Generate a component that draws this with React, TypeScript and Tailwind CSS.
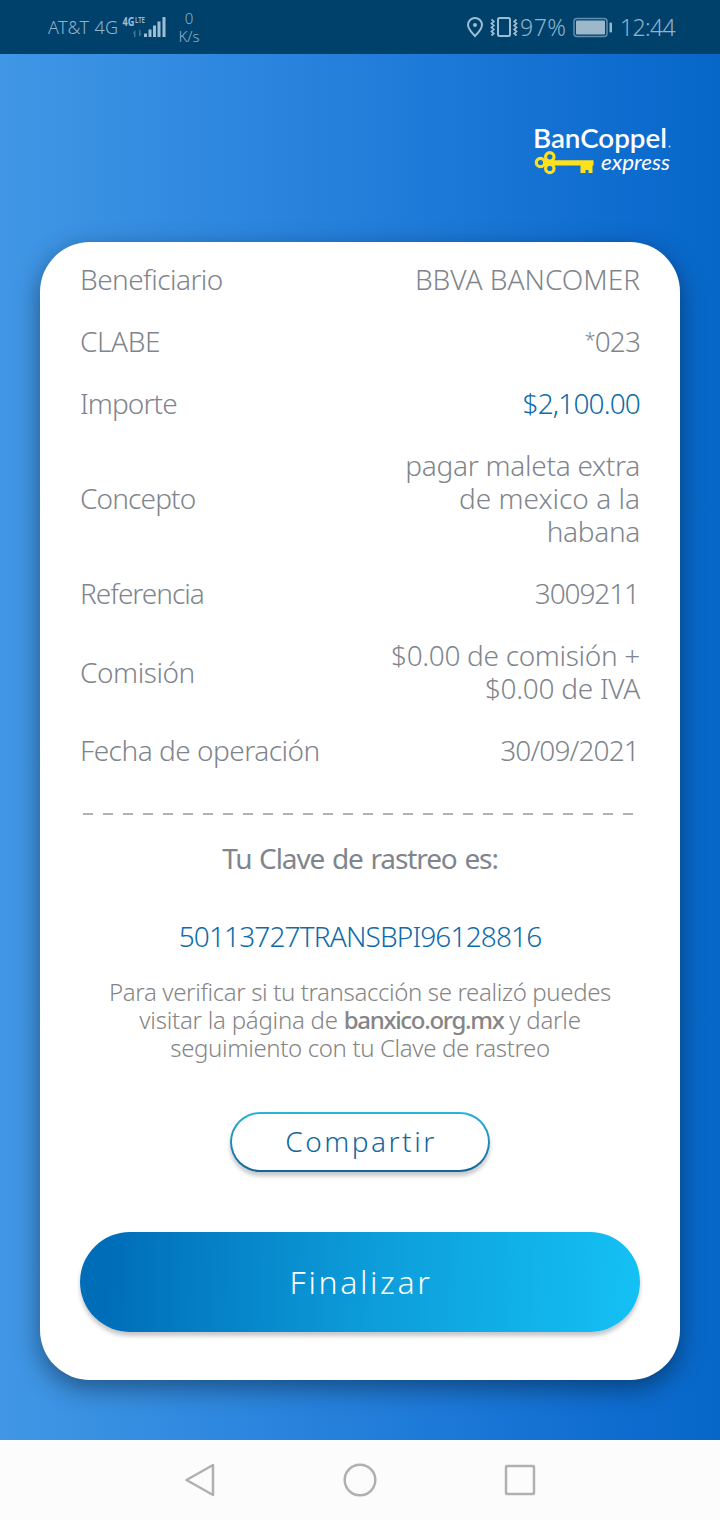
type Row = { label: string; labelClass: string; lines: { text: string; className: string }[]; valueClass?: string };

const rows: Row[] = [
  { label: "Beneficiario", labelClass: "tracking-[-0.550px]", lines: [{ text: "BBVA BANCOMER", className: "" }] },
  { label: "CLABE", labelClass: "tracking-[-0.400px]", lines: [{ text: "*023", className: "tracking-[-0.900px]" }] },
  {
    label: "Importe",
    labelClass: "tracking-[-0.900px]",
    lines: [{ text: "$2,100.00", className: "tracking-[-0.850px]" }],
    valueClass: "text-[#0f6ba8] font-[360]",
  },
  {
    label: "Concepto",
    labelClass: "tracking-[-0.850px]",
    lines: [
      { text: "pagar maleta extra", className: "tracking-[-0.280px]" },
      { text: "de mexico a la", className: "" },
      { text: "habana", className: "tracking-[-0.300px]" },
    ],
  },
  { label: "Referencia", labelClass: "tracking-[-1px]", lines: [{ text: "3009211", className: "tracking-[-1.100px] pr-px" }] },
  {
    label: "Comisión",
    labelClass: "tracking-[-0.450px]",
    lines: [
      { text: "$0.00 de comisión +", className: "tracking-[-0.320px]" },
      { text: "$0.00 de IVA", className: "tracking-[-0.280px]" },
    ],
  },
  { label: "Fecha de operación", labelClass: "tracking-[-0.500px]", lines: [{ text: "30/09/2021", className: "tracking-[-0.850px] pr-px" }] },
];

function StatusBar() {
  return (
    <header className="flex h-[54px] shrink-0 items-center justify-between bg-[#00416c] pl-12 pr-[44px] text-[#8fb3cc]">
      <div className="flex h-full items-center">
        <span className="w-[74px] whitespace-nowrap text-[18px] font-light tracking-[0.300px]">AT&amp;T 4G</span>
        <svg className="h-[54px] w-[46px]" viewBox="122 0 46 54" fill="#9cbdd2">
          <text x="122.500" y="26" fontSize="12" fontWeight="700" textLength="12" lengthAdjust="spacingAndGlyphs">4G</text>
          <text x="135" y="23" fontSize="8.500" fontWeight="600" textLength="10" lengthAdjust="spacingAndGlyphs">LTE</text>
          <path d="M132.500 33.500l3-3.500v7h-1.500v-3.500zM142 33.500l-3 3.500v-7h1.500v3.500z" opacity=".4" />
          <path d="M144 33.500h3v3.500h-3zM148.500 29.500h3v7.500h-3zM153 25.500h3v11.500h-3zM157.500 21.500h3v15.500h-3zM162.500 17h3v20h-3z" />
        </svg>
        <div className="ml-[9px] flex w-[24px] flex-col items-center text-[15px] font-light leading-[18px]">
          <span>0</span>
          <span>K/s</span>
        </div>
      </div>
      <div className="flex h-full items-center">
        <svg className="h-[54px] w-[54px]" viewBox="466 0 54 54" fill="none" stroke="#9dbdd2" strokeWidth="2">
          <path d="M475 36c-4-4-7-7.500-7-11a7 7 0 0 1 14 0c0 3.500-3 7-7 11z" />
          <circle cx="475" cy="25" r="2" fill="#9dbdd2" stroke="none" />
          <rect x="498" y="18" width="12" height="18" rx="1.500" />
          <path d="M491.500 19.500l2.300 2-2.300 2 2.300 2-2.300 2 2.300 2-2.300 2 2.300 2-2.300 2M516.500 19.500l-2.300 2 2.300 2-2.300 2 2.300 2-2.300 2 2.300 2-2.300 2 2.300 2" strokeWidth="1.700" />
        </svg>
        <span className="w-[53px] whitespace-nowrap text-[23px] font-light tracking-[0.500px]">97%</span>
        <svg className="h-[54px] w-[40px]" viewBox="573 0 40 54" fill="#9cb8ca">
          <rect x="574" y="18.500" width="33" height="18" rx="3" fill="none" stroke="#608eae" strokeWidth="1.500" />
          <rect x="576" y="20.500" width="29" height="14" rx="1" />
          <rect x="609.500" y="22.500" width="2.500" height="10" rx="1" />
        </svg>
        <span className="ml-[7px] w-[56px] whitespace-nowrap text-[23px] font-light tracking-[-0.600px]">12:44</span>
      </div>
    </header>
  );
}

function Logo() {
  return (
    <svg className="h-[60px] w-[150px]" viewBox="530 120 150 60" role="img" aria-label="BanCoppel express">
      <text x="533" y="147.500" fontSize="26" fontWeight="600" fill="#fff" textLength="134" lengthAdjust="spacingAndGlyphs" className="font-['Lato',sans-serif]">BanCoppel</text>
      <circle cx="669.500" cy="146.500" r="1" fill="#b9d8f5" />
      <g fill="none" stroke="#ffe11b" strokeWidth="3.200">
        <circle cx="540.500" cy="162.500" r="4.200" />
        <circle cx="549.800" cy="156.800" r="4.200" />
        <circle cx="549.800" cy="168.400" r="4.200" />
      </g>
      <path d="M544 160.300h49.500v5.200h-1v7.500h-4v-3h-3v3h-5v-7.500h-36.500z" fill="#ffe11b" />
      <text x="601" y="170" fontSize="20.500" fontStyle="italic" fill="#fff" textLength="69" lengthAdjust="spacingAndGlyphs" className="font-['Lato',sans-serif]">express</text>
    </svg>
  );
}

export default function App() {
  return (
    <div className="flex h-[1520px] w-[720px] flex-col overflow-hidden font-['Noto_Sans',sans-serif]">
      <StatusBar />
      <main className="flex h-[1386px] flex-col bg-[linear-gradient(90deg,#4197e5_0%,#2681dc_45%,#0f6dd0_85%,#0667c8_100%)] px-10">
        <div className="flex h-[188px] justify-end pt-[66px]">
          <Logo />
        </div>
        <section className="flex h-[1138px] flex-col items-center rounded-[50px] bg-white px-10 pt-[21px] shadow-[0_8px_26px_rgba(0,0,0,0.42)]">
          <dl className="flex w-full flex-col gap-[29px] text-[28px] font-light leading-[33px] text-[#80858d]">
            {rows.map((row) => (
              <div key={row.label} className="flex items-center justify-between">
                <dt className={`whitespace-nowrap ${row.labelClass}`}>{row.label}</dt>
                <dd className={`text-right ${row.valueClass ?? ""}`}>
                  {row.lines.map((line) => (
                    <span key={line.text} className={`block whitespace-nowrap ${line.className}`}>
                      {line.text.startsWith("*") ? (
                        <>
                          <span className="align-[5px] text-[20px] leading-none">*</span>
                          {line.text.slice(1)}
                        </>
                      ) : (
                        line.text
                      )}
                    </span>
                  ))}
                </dd>
              </div>
            ))}
          </dl>
          <svg className="mt-[45px] h-[4px] w-[560px]" viewBox="0 0 560 4">
            <path d="M3 2H555" stroke="#b2b2b2" strokeWidth="2" strokeDasharray="10 10" />
          </svg>
          <h1 className="mt-[26px] whitespace-nowrap text-[28px] font-normal leading-[33px] tracking-[-1.100px] text-[#80858d] [word-spacing:1.500px]">Tu Clave de rastreo es:</h1>
          <p className="mt-[45px] whitespace-nowrap text-[28px] font-[360] leading-[33px] tracking-[-0.850px] text-[#0f6ba8]">50113727TRANSBPI96128816</p>
          <p className="mt-[25px] whitespace-nowrap text-center text-[24px] font-light leading-[28px] text-[#858585]">
            <span className="block tracking-[-0.370px]">Para verificar si tu transacción se realizó puedes</span>
            <span className="block tracking-[-0.250px]">
              visitar la página de <b className="font-medium tracking-[-1.300px]">banxico.org.mx</b> y darle
            </span>
            <span className="block tracking-[-0.370px]">seguimiento con tu Clave de rastreo</span>
          </p>
          <button className="mt-[50px] h-[60px] w-[260px] shrink-0 rounded-full bg-[linear-gradient(180deg,#2bb5d8,#12649c)] p-[2px] shadow-[0_4px_4px_rgba(0,0,0,0.22)]">
            <span className="flex h-full items-center justify-center rounded-full bg-white pb-[2px] pl-[2px] text-[28px] font-light tracking-[2.500px] text-[#12679f]">Compartir</span>
          </button>
          <button className="mt-[60px] flex h-[100px] w-full shrink-0 items-center justify-center rounded-full bg-[linear-gradient(92deg,#006db9_5%,#0c9bd9_50%,#14c1f4_100%)] pl-[2px] text-[32px] font-light tracking-[2.600px] text-white shadow-[0_4px_4px_rgba(0,0,0,0.22)]">Finalizar</button>
        </section>
      </main>
      <nav className="h-20 bg-[#fcfcfc]">
        <svg className="h-20 w-[720px]" viewBox="0 1440 720 80" fill="none" stroke="#b0b0b0" strokeWidth="2.500" strokeLinejoin="round">
          <path d="M186.500 1480L213 1465v30z" />
          <circle cx="360" cy="1480" r="15.300" />
          <rect x="506" y="1466" width="28" height="28" rx="1" />
        </svg>
      </nav>
    </div>
  );
}
